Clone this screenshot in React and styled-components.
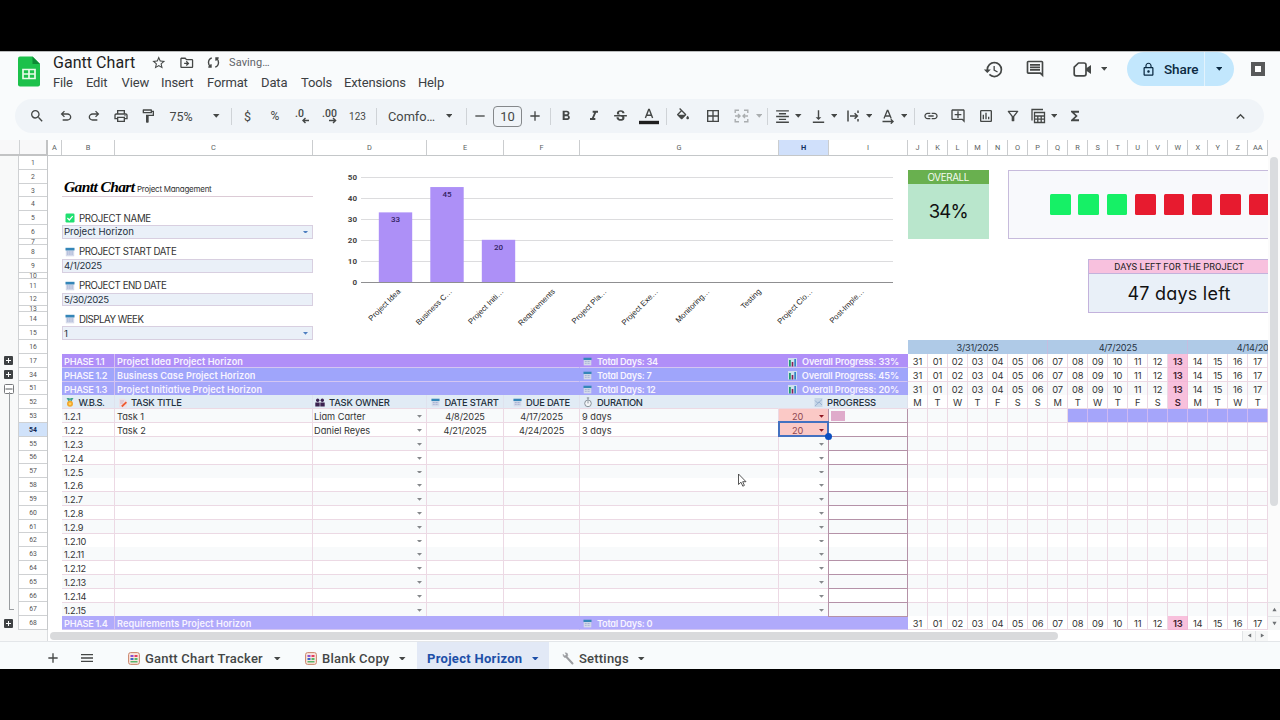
import React from "react";
import styled, { createGlobalStyle, css } from "styled-components";
import {
  MdSearch, MdOutlinePrint, MdOutlineFormatPaint, MdFormatBold, MdFormatItalic,
  MdBorderAll, MdFormatAlignCenter, MdVerticalAlignBottom, MdLink, MdOutlineAddComment,
  MdOutlineInsertChart, MdOutlineFilterAlt, MdFunctions, MdKeyboardArrowUp, MdAdd, MdMenu, MdRemove,
  MdStarOutline, MdOutlineDriveFileMove, MdHistory, MdOutlineComment, MdLockOutline,
  MdStrikethroughS,
} from "react-icons/md";

const GlobalStyle = createGlobalStyle`
  * { box-sizing: border-box; }
  html, body { margin: 0; padding: 0; background: #000; }
  body { overflow: hidden; font-family: Roboto, "Liberation Sans", sans-serif; }
`;

const UI = `Roboto, "Liberation Sans", sans-serif`;
const ROUND = `Inter, Lato, sans-serif`;
const ROW = 13.82;
const GAP_ROW = 6.1;
const DAY = 20.03;
const COLUMNS = `14px 53px 198px 114px 77px 76px 199px 50px 79px repeat(18, ${DAY}px)`;
const LINE = "#ecd9e4";

/* ---------- frame ---------- */

const Screen = styled.div`
  width: 1280px;
  height: 720px;
  padding: 51px 0;
  background: #000;
  overflow: hidden;
`;

const AppWindow = styled.div`
  display: flex;
  flex-direction: column;
  height: 618px;
  background: #f9fbfc;
  border-top: 1px solid #b9bbbc;
  overflow: hidden;
`;

/* ---------- header ---------- */

const Header = styled.header`
  display: flex;
  height: 47px;
  padding-left: 18px;
  color: #444746;
`;

const Logo = styled.svg`
  width: 22px;
  height: 31px;
  margin: 4px 13px 0 0;
  flex: none;
`;

const TitleBlock = styled.div`
  display: flex;
  flex-direction: column;
  flex: none;
  width: 930px;
`;

const TitleRow = styled.div`
  display: flex;
  align-items: center;
  height: 21px;
  svg { flex: none; }
`;

const DocTitle = styled.span`
  width: 98px;
  font-size: 16px;
  letter-spacing: 0.04px;
  color: #1f1f1f;
  white-space: nowrap;
`;

const TitleIcon = styled.span`
  display: flex;
  width: 28px;
  font-size: 15.5px;
`;

const Saving = styled.span`
  margin-left: -6px;
  font-size: 11px;
  letter-spacing: 0.1px;
  color: #5f6368;
`;

const MenuBar = styled.nav`
  display: flex;
  height: 18px;
  align-items: center;
  font-size: 13px;
  letter-spacing: -0.15px;
  color: #3c4043;
`;

const MenuItem = styled.span`
  flex: none;
  width: ${(p) => p.$w}px;
`;

const HeaderActions = styled.div`
  display: flex;
  align-items: center;
  height: 34px;
  flex: 1;
  svg { flex: none; }
`;

const Action = styled.span`
  display: flex;
  justify-content: center;
  align-items: center;
  flex: none;
  width: ${(p) => p.$w}px;
  font-size: ${(p) => p.$size || 21}px;
`;

const ShareButton = styled.div`
  display: flex;
  align-items: center;
  flex: none;
  width: 107px;
  height: 34px;
  margin-left: 16px;
  border-radius: 17px;
  background: #c2e7fd;
  color: #0b2a42;
  font-size: 13.5px;
  font-weight: 500;
  overflow: hidden;
`;

const ShareMain = styled.span`
  display: flex;
  align-items: center;
  gap: 8px;
  width: 78px;
  height: 100%;
  padding-left: 14px;
  letter-spacing: -0.1px;
  border-right: 1px solid #e3f3fd;
`;

const ShareMore = styled.span`
  display: flex;
  justify-content: center;
  width: 28px;
`;

const StopMark = styled.span`
  width: 14px;
  height: 14px;
  margin-left: 17px;
  border: 4px solid #58595a;
  background: #fff;
`;

/* ---------- toolbar ---------- */

const Toolbar = styled.div`
  display: flex;
  align-items: center;
  flex: none;
  height: 34px;
  margin: 0 16px 7px 15px;
  padding-left: 7px;
  border-radius: 17px;
  background: #f0f4f8;
  color: #444746;
`;

const Slot = styled.span`
  display: flex;
  align-items: center;
  justify-content: ${(p) => (p.$start ? "flex-start" : "center")};
  flex: none;
  width: ${(p) => p.$w}px;
  margin-left: ${(p) => p.$ml || 0}px;
  font-size: ${(p) => p.$size || 16}px;
  letter-spacing: ${(p) => p.$ls || 0}px;
  opacity: ${(p) => (p.$dim ? 0.4 : 1)};
  white-space: nowrap;
  svg { flex: none; }
`;

const Divider = styled.span`
  flex: none;
  width: 1px;
  height: 17px;
  margin-left: ${(p) => p.$l}px;
  margin-right: ${(p) => p.$r}px;
  background: #cfd3d7;
`;

const SizeBox = styled.span`
  display: flex;
  align-items: center;
  justify-content: center;
  width: 29px;
  height: 21px;
  border: 1px solid #85888b;
  border-radius: 4px;
  font-size: 13px;
`;

const DropSlot = styled.span`
  display: flex;
  align-items: center;
  justify-content: space-between;
  flex: none;
  width: 27.5px;
  margin-left: ${(p) => p.$ml}px;
  font-size: 17px;
`;

const CollapseSlot = styled.span`
  display: flex;
  justify-content: center;
  width: 47px;
  margin-left: auto;
  font-size: 17px;
`;

/* ---------- sheet ---------- */

const ColumnHeader = styled.div`
  display: flex;
  flex: none;
  height: 16px;
  background: #fbfbfc;
`;

const Corner = styled.div`
  display: flex;
  flex: none;
  width: 48px;
  border-right: 2px solid #c2c3c4;
  border-bottom: 2px solid #c2c3c4;
  background: #f8f8f9;
  &::before {
    content: "";
    width: 19px;
    border-right: 1px solid #d0d2d4;
  }
`;

const ColumnLetters = styled.div`
  display: grid;
  grid-template-columns: ${COLUMNS};
  width: 1220px;
  overflow: hidden;
  background: #fff;
  border-bottom: 1px solid #c4c7c9;
`;

const Letter = styled.span`
  display: flex;
  align-items: center;
  justify-content: center;
  font: 7.4px ${UI};
  color: #5b5f62;
  border-right: 1px solid #cbcdcf;
  ${(p) => p.$active && css`
    background: #d0e0fb;
    color: #15305e;
    font-weight: 700;
  `}
`;

const SheetBody = styled.div`
  display: flex;
  flex: none;
  height: 474.4px;
  background: #fff;
  overflow: hidden;
`;

const GroupGutter = styled.div`
  flex: none;
  display: flex;
  flex-direction: column;
  align-items: center;
  width: 18px;
  padding-top: 198px;
  background: #f8f9f9;
`;

const GroupCell = styled.div`
  display: flex;
  align-items: center;
  justify-content: center;
  flex: none;
  width: 18px;
  height: ${ROW}px;
  padding-right: 1px;
`;

const GroupLine = styled.div`
  flex: none;
  width: 5px;
  height: ${ROW * 16 - 4}px;
  margin: -3px 0 7px 4px;
  border-left: 1px solid #9a9da0;
  border-bottom: 1px solid #9a9da0;
`;

const RowNumbers = styled.div`
  flex: none;
  width: 30px;
  border-left: 1px solid #cfd1d3;
  border-right: 1px solid #c6c8ca;
  background: #fff;
`;

const RowNumber = styled.div`
  display: flex;
  align-items: center;
  justify-content: center;
  height: ${(p) => (p.$small ? GAP_ROW : ROW)}px;
  padding-top: 1px;
  overflow: hidden;
  border-bottom: 1px solid #cfd1d3;
  font: 6.8px ${UI};
  color: #555;
  ${(p) => p.$active && css`
    background: #d0e2fa;
    color: #102a56;
    font-weight: 700;
  `}
`;

const Cells = styled.div`
  flex: none;
  width: 1220px;
  overflow: hidden;
`;

const Dashboard = styled.div`
  display: flex;
  height: 198px;
`;

/* ---------- project form ---------- */

const ProjectForm = styled.div`
  flex: none;
  width: 251px;
  margin-left: 14px;
  padding-top: ${ROW}px;
`;

const Brand = styled.div`
  display: flex;
  align-items: baseline;
  height: ${ROW * 2}px;
  padding: 7px 0 0 2px;
  margin-bottom: ${ROW}px;
  border-bottom: 1px solid #dccbd6;
  white-space: nowrap;
`;

const BrandName = styled.span`
  width: 73px;
  font: italic 700 15.5px/19px "Liberation Serif", serif;
  letter-spacing: -0.6px;
  color: #000;
`;

const BrandSub = styled.span`
  font: 8px ${ROUND};
  font-feature-settings: "cv11";
  letter-spacing: -0.26px;
  color: #333;
`;

const FieldLabel = styled.div`
  display: flex;
  align-items: center;
  gap: 4px;
  height: ${ROW}px;
  padding-left: 3px;
  font: 9.7px ${ROUND};
  letter-spacing: ${(p) => p.$ls}px;
  color: #333;
  white-space: nowrap;
`;

const Field = styled.div`
  display: flex;
  align-items: center;
  justify-content: space-between;
  height: ${ROW}px;
  margin-bottom: ${(p) => (p.$last ? 0 : GAP_ROW)}px;
  padding: 0 4px 0 1px;
  border: 1px solid #d8cfe0;
  background: #eaf0f8;
  font: 9.6px ${ROUND};
  font-feature-settings: "cv11";
  letter-spacing: ${(p) => p.$ls}px;
  color: #26323f;
`;

const Chart = styled.svg`
  flex: none;
  width: 595px;
  height: 198px;
`;

/* ---------- right side summary ---------- */

const Summary = styled.div`
  flex: none;
  display: flex;
  flex-direction: column;
  width: 361px;
  padding-top: 13.5px;
`;

const SummaryTop = styled.div`
  display: flex;
  gap: 19px;
  height: 69.5px;
  margin-bottom: 19.5px;
`;

const Overall = styled.div`
  flex: none;
  width: 80.5px;
  background: #b9e6cc;
`;

const OverallHead = styled.div`
  height: 14px;
  background: #69b04f;
  color: #f4fbf0;
  font: 9.8px/15px ${ROUND};
  letter-spacing: -0.35px;
  text-align: center;
`;

const OverallValue = styled.div`
  font: 18.5px/55px ${ROUND};
  letter-spacing: -0.9px;
  text-align: center;
  color: #111;
`;

const SquarePanel = styled.div`
  display: flex;
  align-items: center;
  gap: 7.9px;
  flex: 1;
  padding-left: 41.5px;
  border: 1px solid #c7bbdc;
  border-right: 0;
  background: #f8f9fc;
  overflow: hidden;
`;

const Square = styled.span`
  flex: none;
  width: 20.5px;
  height: 20.5px;
  border-radius: 1.5px;
  background: ${(p) => (p.$done ? "#16f066" : "#e71b2f")};
`;

const DaysLeft = styled.div`
  width: 181px;
  height: 54.5px;
  margin: 0 0 27.2px 180px;
  border: 1px solid #c3b2dc;
  border-right: 0;
  background: #e9f0f8;
`;

const DaysLeftHead = styled.div`
  height: 14px;
  border-bottom: 1px solid #c3b2dc;
  background: #f8c1de;
  font: 9.3px/14px ${UI};
  letter-spacing: 0.1px;
  text-align: center;
  color: #222;
`;

const DaysLeftValue = styled.div`
  font: 18px/39px ${ROUND};
  font-feature-settings: "cv11";
  letter-spacing: 0.22px;
  text-align: center;
  color: #111;
`;

const Weeks = styled.div`
  display: flex;
  flex: none;
  height: 13.8px;
  overflow: hidden;
`;

const Week = styled.span`
  flex: none;
  width: ${DAY * 7}px;
  border-right: 1px solid #c4bde0;
  background: #afcae7;
  font: 9.2px/15px ${ROUND};
  letter-spacing: -0.25px;
  text-align: center;
  color: #26323f;
`;

/* ---------- task table ---------- */

const Row = styled.div`
  display: grid;
  grid-template-columns: ${COLUMNS};
  height: ${ROW}px;
  font: 9.2px ${ROUND};
  font-feature-settings: "cv11";
  color: #333;
  white-space: nowrap;
`;

const Cell = styled.div`
  position: relative;
  display: flex;
  align-items: center;
  justify-content: ${(p) => p.$align || "flex-start"};
  gap: ${(p) => p.$gap ?? 0}px;
  min-width: 0;
  padding: ${(p) => p.$pad || "2px 2px 0"};
  letter-spacing: ${(p) => p.$ls || 0}px;
  border-right: 1px solid ${LINE};
  border-bottom: 1px solid ${LINE};
  background: ${(p) => p.$bg || "#fff"};
  grid-column: span ${(p) => p.$span || 1};
`;

const PhaseCell = styled(Cell)`
  border-right-color: ${(p) => (p.$edge ? "#d5c2ef" : "transparent")};
  border-bottom-color: #d4c6f2;
  color: #f7f3ff;
  font-weight: 600;
`;

const PhaseTotals = styled(PhaseCell)`
  justify-content: space-between;
  padding: 2px 8px 0 3px;
`;

const Labelled = styled.span`
  display: flex;
  align-items: center;
  gap: 5px;
  letter-spacing: ${(p) => p.$ls || 0}px;
`;

const HeadCell = styled(Cell)`
  border-right-color: ${(p) => (p.$edge === false ? "#e1ebf5" : "#dfe2ee")};
  background: #e1ebf5;
  color: #24303c;
  font-size: 9.4px;
  font-weight: 500;
`;

const Blank = styled.div`
  border-right: 1px solid transparent;
`;

const DayCell = styled(Cell)`
  padding: 2px 0 0;
  justify-content: center;
  font-size: 9.3px;
  letter-spacing: -0.1px;
  ${(p) => p.$today && css`
    background: #f8c0dc;
    border-bottom-color: #f3b7d6;
    border-right-color: #f3b7d6;
    font-weight: 600;
    color: #40202f;
  `}
  ${(p) => p.$busy && css`
    background: #a5a5fa;
    border-right-color: #cfb9f2;
  `}
`;

const ProgressCell = styled(Cell)`
  padding: 0 2px;
  border-right-color: #b592a8;
  border-bottom-color: #b592a8;
  box-shadow: -1px 0 0 #b592a8;
  z-index: 1;
`;

const ProgressBar = styled.span`
  width: 14px;
  height: 10px;
  background: #dfabcb;
`;

const Selection = styled.span`
  position: absolute;
  z-index: 2;
  inset: -2px -1px -1px -1px;
  border: 2px solid #4471c0;
  &::after {
    content: "";
    position: absolute;
    right: -5px;
    bottom: -5px;
    width: 7px;
    height: 7px;
    border-radius: 50%;
    background: #0c4fc0;
  }
`;

const Percent = styled.span`
  flex: 1;
  padding-left: 11px;
  color: #8d4650;
`;

const Cursor = styled.svg`
  position: absolute;
  z-index: 3;
  left: 157px;
  top: 8px;
  width: 10px;
  height: 15px;
`;

/* ---------- scrollbars ---------- */

const VerticalScroll = styled.div`
  display: flex;
  flex-direction: column;
  justify-content: space-between;
  align-items: center;
  flex: none;
  width: 12px;
  background: #fbfbfb;
`;

const VerticalThumb = styled.div`
  width: 8px;
  height: 349px;
  margin-top: 1px;
  border-radius: 4px;
  background: #dadcdf;
`;

const StepButtons = styled.div`
  display: flex;
  flex-direction: ${(p) => (p.$row ? "row" : "column")};
  background: #f6f7f7;
`;

const StepButton = styled.span`
  display: flex;
  align-items: center;
  justify-content: center;
  width: ${(p) => p.$w}px;
  height: ${(p) => p.$h}px;
  border: solid #e2e4e6;
  border-width: ${(p) => (p.$row ? "0 0 0 1px" : "1px 0 0 0")};
`;

const HorizontalScroll = styled.div`
  display: flex;
  flex: none;
  align-items: center;
  height: 10.6px;
  padding-right: 12px;
  background: #fff;
`;

const ScrollStub = styled.div`
  flex: none;
  width: 48px;
  height: 100%;
  background: #f8f9f9;
  border-right: 1px solid #dadcde;
`;

const HorizontalThumb = styled.div`
  width: 1008px;
  height: 8px;
  margin: 0 auto 0 2px;
  border-radius: 4px;
  background: #d9dadc;
`;

/* ---------- tabs ---------- */

const Tabs = styled.footer`
  display: flex;
  align-items: stretch;
  flex: 1;
  padding-left: 38px;
  border-top: 1px solid #e3e6e9;
  background: #f8fbfc;
  color: #444746;
`;

const TabTool = styled.span`
  display: flex;
  align-items: center;
  justify-content: center;
  padding-top: 6px;
  width: ${(p) => p.$w}px;
  font-size: 16px;
`;

const Tab = styled.span`
  display: flex;
  align-items: center;
  flex: none;
  width: ${(p) => p.$w}px;
  padding: 6px 0 0 ${(p) => p.$pl}px;
  font-size: 13px;
  font-weight: 500;
  letter-spacing: 0.22px;
  white-space: nowrap;
  svg { flex: none; }
  ${(p) => p.$active && css`
    background: #e2e9f6;
    color: #1d4fa8;
    font-weight: 700;
    letter-spacing: 0.3px;
  `}
`;

const TabName = styled.span`
  width: ${(p) => p.$w}px;
  margin-left: ${(p) => p.$ml ?? 5}px;
`;

/* ---------- drawings ---------- */

const Caret = ({ w = 6.5, color = "currentColor" }) => (
  <svg width={w} height={w * 0.56} viewBox="0 0 8 4.5" style={{ flex: "none" }}><path d="M0 0h8L4 4.500z" fill={color} /></svg>
);

const Arrow = ({ dir }) => (
  <svg width="5" height="5" viewBox="0 0 6 6">
    <path d="M3 1 5.5 5h-5z" fill="#6f7275" transform={`rotate(${dir} 3 3)`} />
  </svg>
);

const UndoIcon = ({ flip }) => (
  <svg width="16" height="16" viewBox="0 -960 960 960" fill="currentColor">
    <path
      transform={flip ? "translate(960 0) scale(-1 1)" : undefined}
      d="M280-200v-80h284q63 0 109.5-40T720-420q0-60-46.5-100T564-560H312l104 104-56 56-200-200 200-200 56 56-104 104h252q97 0 166.5 63T800-420q0 94-69.5 157T564-200H280Z"
    />
  </svg>
);

const SyncIcon = () => (
  <svg width="13" height="13" viewBox="0 0 13 13" fill="none" stroke="currentColor" strokeWidth="1.400">
    <path d="M4.800 1.800Q1.500 3 1.500 6.500q0 2.500 1.800 4M1.300 11h2.700V8.200M8.200 11.200q3.300-1.200 3.300-4.700 0-2.500-1.800-4M11.700 2H9v2.800" />
  </svg>
);

const FillIcon = () => (
  <svg width="16" height="16" viewBox="0 0 24 24" fill="currentColor">
    <path d="M16.560 8.940 7.620 0 6.210 1.410l2.380 2.380-5.150 5.150a1.490 1.490 0 0 0 0 2.120l5.500 5.500c.29.29.68.44 1.060.44s.77-.15 1.060-.44l5.500-5.500c.59-.58.59-1.530 0-2.120zM5.210 10 10 5.210 14.790 10H5.210zM19 11.500s-2 2.170-2 3.500c0 1.100.9 2 2 2s2-.9 2-2c0-1.330-2-3.500-2-3.500z" />
  </svg>
);

const DecimalIcon = ({ more }) => (
  <svg width="17" height="16" viewBox="0 0 17 16">
    <text x={more ? 0 : 1} y="8.5" fontSize="10.5" fontWeight="500" fontFamily="Roboto, sans-serif" fill="currentColor" textLength={more ? 15 : 9}>
      {more ? ".00" : ".0"}
    </text>
    <path d={more ? "M7 12.5h6M11 10l2.6 2.5L11 15" : "M9 12.5h6M11.5 10 9 12.5l2.5 2.5"} fill="none" stroke="currentColor" strokeWidth="1.4" />
  </svg>
);

const TextColorIcon = () => (
  <svg width="20" height="18" viewBox="0 0 20 18">
    <path d="M6.400 11 9.700 2.500h.6l3.300 8.500M7.600 8.200h4.800" fill="none" stroke="currentColor" strokeWidth="1.4" />
    <path d="M0 13.800h20v3.400H0z" fill="#1f1f1f" />
  </svg>
);

const MergeIcon = () => (
  <svg width="15" height="14" viewBox="0 0 15 14" fill="none" stroke="currentColor" strokeWidth="1.4">
    <path d="M5 1.2H1.2V4M1.2 10v2.8H5M10 1.2h3.8V4M13.8 10v2.8H10M1 7h4.5M14 7H9.500M4 5l2 2-2 2M11 5 9 7l2 2" />
  </svg>
);

const WrapIcon = () => (
  <svg width="15" height="14" viewBox="0 0 15 14" fill="none" stroke="currentColor" strokeWidth="1.5">
    <path d="M3 1.500v11M13 1.500v2.500M13 10v2.500M5 7h7.500M9.600 4.200 12.400 7l-2.800 2.800" />
  </svg>
);

const RotateIcon = () => (
  <svg width="15" height="15" viewBox="0 0 15 15" fill="none" stroke="currentColor" strokeWidth="1.3">
    <path d="M4 9.500 7.300 1.500h.6l3.300 8M5.200 7h4.800M2.500 12.500h10M10.800 10.300l2.300 2.200-2.300 2.200" />
  </svg>
);

const FilterViewIcon = () => (
  <svg width="16" height="16" viewBox="0 0 16 16" fill="none" stroke="currentColor" strokeWidth="1.3">
    <path d="M2 12.500V1.500h11M4.500 4.500h10v10h-10zM4.500 8h10M4.500 11.200h10M7.800 8v6.500M11.200 8v6.500" />
  </svg>
);

const CameraIcon = () => (
  <svg width="19" height="17" viewBox="0 0 19 17">
    <path d="M5.500 2H11q2 0 2 2v9q0 1.800-2 1.800H3.200q-2 0-2-1.800V6.200z" fill="none" stroke="currentColor" strokeWidth="1.700" strokeLinejoin="round" />
    <path d="M13 7.500 18 4v9l-5-3.500z" fill="currentColor" />
  </svg>
);

const LogoMark = () => (
  <Logo viewBox="0 0 22 31">
    <path d="M2 .5h12.500L22 8v20.500q0 2-2 2H2q-2 0-2-2v-26q0-2 2-2z" fill="#1cc14b" />
    <path d="M14.500.5 22 8h-7.500z" fill="#0c8a35" />
    <path d="M5 13.500h12v9H5zM5 18h12M11 13.500v9" fill="none" stroke="#e9fbe9" strokeWidth="1.700" />
  </Logo>
);

const CalendarEmoji = ({ s = 10 }) => (
  <svg width={s} height={s} viewBox="0 0 10 10">
    <path d="M.8 1.500h8.400v7.800H.8z" fill="#d5daea" />
    <path d="M.5.800h9v2.600h-9z" fill="#3486b8" />
    <path d="M2 5h6M2 7h6" stroke="#9dabd0" strokeWidth="1" strokeDasharray="1.200 .5" />
  </svg>
);

const CheckEmoji = () => (
  <svg width="10" height="10" viewBox="0 0 10 10">
    <rect x=".5" y=".5" width="9" height="9" rx="1.200" fill="#1fe070" />
    <path d="m2.400 5 1.900 2 3.400-3.800" fill="none" stroke="#fff" strokeWidth="1.200" />
  </svg>
);

const MedalEmoji = () => (
  <svg width="10" height="11" viewBox="0 0 10 11">
    <path d="M1.500 1h3L6 5H4zM8.500 1h-3L4 5h2z" fill="#3fa08c" />
    <circle cx="5" cy="6.800" r="3" fill="#f2a62c" />
    <circle cx="5" cy="6.800" r="1.400" fill="#ffd35c" />
  </svg>
);

const MemoEmoji = () => (
  <svg width="10" height="10" viewBox="0 0 10 10">
    <path d="M1 .8h5.500L9 3v6.200H1z" fill="#eddfe6" />
    <path d="M2 3h4M2 5h3" stroke="#c9a7b4" strokeWidth=".7" />
    <path d="m3.800 8.500 4.600-4.300" stroke="#ee5a2f" strokeWidth="1.800" />
  </svg>
);

const PeopleEmoji = () => (
  <svg width="10" height="9" viewBox="0 0 10 9" fill="#3a2150">
    <circle cx="2.700" cy="2.200" r="1.700" /><circle cx="7.300" cy="2.200" r="1.700" />
    <path d="M.3 4.500h4.400v4H.3zM5.300 4.500h4.400v4H5.300z" />
  </svg>
);

const StopwatchEmoji = () => (
  <svg width="10" height="11" viewBox="0 0 10 11" fill="none" stroke="#7d8790">
    <circle cx="5" cy="6.400" r="3.300" fill="#f3f6f8" strokeWidth=".9" /><path d="M5 6.400V4.200M3.800.9h2.400M5 1v1.800" strokeWidth=".9" />
  </svg>
);

const BarsEmoji = () => (
  <svg width="9" height="10" viewBox="0 0 9 10">
    <path d="M0 1h9v8.500H0z" fill="#cfe0ee" />
    <path d="M1 3h1.800v6.500H1z" fill="#1f9c72" /><path d="M3.700 5h1.600v4.500H3.700z" fill="#8d1f55" /><path d="M6.300 2H8v7.500H6.300z" fill="#3285c5" />
  </svg>
);

const TrendEmoji = () => (
  <svg width="9" height="9" viewBox="0 0 9 9">
    <path d="M.5 0h8v9h-8z" fill="#c6d6e8" /><path d="M1 2.500 3.500 5 5 4l3 3M1 8l7-6.500" fill="none" stroke="#8fa9cb" strokeWidth=".8" />
  </svg>
);

const SheetEmoji = () => (
  <svg width="12" height="13" viewBox="0 0 12 13">
    <rect x=".6" y=".6" width="10.800" height="11.800" rx="2" fill="#fbe6df" stroke="#c98468" />
    <path d="M2.500 3h3v2h-3z" fill="#8a4fd0" /><path d="M6.500 3h3v2h-3z" fill="#e2405f" />
    <path d="M2.500 6h3v2h-3z" fill="#3a68c8" /><path d="M6.500 6h3v2h-3zM2.500 9h7v1.500h-7z" fill="#58b66a" />
  </svg>
);

const WrenchEmoji = () => (
  <svg width="12" height="13" viewBox="0 0 12 13" fill="none" stroke="#9b9da0">
    <path d="m4.500 5 6 6.500" strokeWidth="2" strokeLinecap="round" />
    <path d="M1 2.200 2.800 4 4.300 2.800 3.200.8Q6 .5 5.800 3.500 5 6 2.500 5.500 1 5 1 2.200z" fill="#9b9da0" strokeWidth=".5" />
  </svg>
);

const PlusToggle = () => (
  <svg width="9" height="9" viewBox="0 0 9 9">
    <rect width="9" height="9" rx="1" fill="#3f4244" /><path d="M2 4.500h5M4.500 2v5" stroke="#fff" strokeWidth="1" />
  </svg>
);

const MinusToggle = () => (
  <svg width="10" height="10" viewBox="0 0 10 10">
    <rect x=".5" y=".5" width="9" height="9" rx="1" fill="#fff" stroke="#77797c" /><path d="M1.500 5h7" stroke="#55585a" />
  </svg>
);

/* ---------- data ---------- */

const letters = ["A", "B", "C", "D", "E", "F", "G", "H", "I", "J", "K", "L", "M", "N", "O", "P", "Q", "R", "S", "T", "U", "V", "W", "X", "Y", "Z", "AA"];
const rowNumbers = [1, 2, 3, 4, 5, 6, 7, 8, 9, 10, 11, 12, 13, 14, 15, 16, 17, 34, 51, 52, 53, 54, 55, 56, 57, 58, 59, 60, 61, 62, 63, 64, 65, 66, 67, 68];
const smallRows = [7, 10, 13];
const dates = ["31", "01", "02", "03", "04", "05", "06", "07", "08", "09", "10", "11", "12", "13", "14", "15", "16", "17"];
const weekdays = ["M", "T", "W", "T", "F", "S", "S", "M", "T", "W", "T", "F", "S", "S", "M", "T", "W", "T"];
const bars = [
  { label: "Project Idea", value: 33 }, { label: "Business C…", value: 45 }, { label: "Project Initi…", value: 20 },
  { label: "Requirements" }, { label: "Project Pla…" }, { label: "Project Exe…" }, { label: "Monitoring…" },
  { label: "Testing" }, { label: "Project Clo…" }, { label: "Post-Imple…" },
];
const tasks = Array.from({ length: 15 }, (_, i) => ({ wbs: `1.2.${i + 1}` }));
Object.assign(tasks[0], { title: "Task 1", owner: "Liam Carter", start: "4/8/2025", due: "4/17/2025", duration: "9 days", progress: 20, from: 8 });
Object.assign(tasks[1], { title: "Task 2", owner: "Daniel Reyes", start: "4/21/2025", due: "4/24/2025", duration: "3 days", progress: 20, selected: true });

/* ---------- parts ---------- */

function ProgressChart() {
  const zero = 126;
  const y = (v) => zero - v * 2.11;
  return (
    <Chart viewBox="0 0 595 198" fontFamily='Roboto, "Liberation Sans", sans-serif' fontSize="8">
      {[50, 40, 30, 20, 10, 0].map((v) => (
        <g key={v}>
          <path d={`M48 ${Math.round(y(v)) + 0.5}h532`} stroke={v ? "#dcdcde" : "#8f8f91"} />
          <text x="44" y={y(v) + 3} textAnchor="end" fontWeight="700" fill="#444">{v}</text>
        </g>
      ))}
      {bars.map((b, i) => {
        const x = 82.5 + i * 51.5;
        return (
          <g key={b.label}>
            {b.value && <rect x={x - 16.7} y={y(b.value)} width="33.4" height={zero - y(b.value)} fill="#ad90f7" />}
            {b.value && <text x={x} y={y(b.value) + 10} textAnchor="middle" fontWeight="500" fill="#33215f">{b.value}</text>}
            <text
              transform={`translate(${x + 5.5} 136) rotate(-45)`}
              textAnchor="end"
              fontFamily='"Liberation Sans", sans-serif'
              fontSize="7.8"
              fill="#222"
            >
              {b.label}
            </text>
          </g>
        );
      })}
    </Chart>
  );
}

const Days = ({ values, bg }) => values.map((v, i) => <DayCell key={i} $bg={bg} $today={i === 13}>{v}</DayCell>);

function PhaseRow({ no, title, days, progress, color, bg }) {
  return (
    <Row>
      <Blank />
      <PhaseCell $bg={color} $edge $ls={-0.3}>PHASE {no}</PhaseCell>
      <PhaseCell $bg={color} $span={4} $ls={0.07}>{title} Project Horizon</PhaseCell>
      <PhaseTotals $bg={color} $span={3}>
        <Labelled $ls={-0.27}><CalendarEmoji s={9} />Total Days: {days}</Labelled>
        {progress && <Labelled $ls={-0.14}><BarsEmoji />Overall Progress: {progress}</Labelled>}
      </PhaseTotals>
      <Days values={dates} bg={bg} />
    </Row>
  );
}

function TaskRow({ task, index }) {
  const bg = index % 2 ? "#fff" : "#f8fafb";
  const filled = task.progress !== undefined;
  return (
    <Row>
      <Blank />
      <Cell $bg={bg} $ls={-0.2}>{task.wbs}</Cell>
      <Cell $bg={bg}>{task.title}</Cell>
      <Cell $bg={bg} $align="space-between" $pad="2px 4px 0 1px"><span>{task.owner}</span><Caret w={5} color="#85888b" /></Cell>
      <Cell $bg={bg} $align="center" $ls={-0.15}>{task.start}</Cell>
      <Cell $bg={bg} $align="center" $ls={-0.15}>{task.due}</Cell>
      <Cell $bg={bg}>
        {task.duration}
        {index === 4 && (
          <Cursor viewBox="0 0 10 15"><path d="M1.500 1v10.500l2.500-2.300 1.800 4 1.600-.8-1.700-3.700H9z" fill="#fff" stroke="#444" strokeWidth=".9" /></Cursor>
        )}
      </Cell>
      <Cell $bg={filled ? "#fbc9c6" : bg} $align="flex-end" $pad="2px 4px 0 2px">
        {filled && <Percent>{task.progress}</Percent>}
        <Caret w={5} color={filled ? "#8e1620" : "#85888b"} />
        {task.selected && <Selection />}
      </Cell>
      <ProgressCell $bg={bg}>{index === 0 && <ProgressBar />}</ProgressCell>
      {dates.map((_, i) => <DayCell key={i} $bg={bg} $busy={task.from !== undefined && i >= task.from} />)}
    </Row>
  );
}

function Tools() {
  return (
    <Toolbar>
      <Slot $w={30}><MdSearch /></Slot>
      <Slot $w={28}><UndoIcon /></Slot>
      <Slot $w={28}><UndoIcon flip /></Slot>
      <Slot $w={26}><MdOutlinePrint /></Slot>
      <Slot $w={27}><MdOutlineFormatPaint /></Slot>
      <Slot $w={40} $size={12.5}>75%</Slot>
      <Slot $w={29} $ml={1}><Caret /></Slot>
      <Divider $l={0} $r={0} />
      <Slot $w={31} $size={12.5}>$</Slot>
      <Slot $w={24} $size={12}>%</Slot>
      <Slot $w={30}><DecimalIcon /></Slot>
      <Slot $w={26}><DecimalIcon more /></Slot>
      <Slot $w={29} $size={10}>123</Slot>
      <Divider $l={4} $r={11} />
      <Slot $w={49} $size={12.8} $start>Comfo…</Slot>
      <Slot $w={24}><Caret /></Slot>
      <Divider $l={5} $r={0.5} />
      <Slot $w={24}><MdRemove /></Slot>
      <Slot $w={32}><SizeBox>10</SizeBox></Slot>
      <Slot $w={23}><MdAdd /></Slot>
      <Divider $l={3.5} $r={2} />
      <Slot $w={26}><MdFormatBold /></Slot>
      <Slot $w={29}><MdFormatItalic /></Slot>
      <Slot $w={25} $size={17}><MdStrikethroughS /></Slot>
      <Slot $w={31}><TextColorIcon /></Slot>
      <Divider $l={2} $r={3} />
      <Slot $w={26}><FillIcon /></Slot>
      <Slot $w={33}><MdBorderAll /></Slot>
      <Slot $w={24} $dim><MergeIcon /></Slot>
      <Slot $w={12} $dim><Caret /></Slot>
      <Divider $l={2} $r={1} />
      <DropSlot $ml={5}><MdFormatAlignCenter /><Caret /></DropSlot>
      <DropSlot $ml={8}><MdVerticalAlignBottom /><Caret /></DropSlot>
      <DropSlot $ml={7.5}><WrapIcon /><Caret /></DropSlot>
      <DropSlot $ml={7.5}><RotateIcon /><Caret /></DropSlot>
      <Divider $l={6.5} $r={3} />
      <Slot $w={26}><MdLink /></Slot>
      <Slot $w={29}><MdOutlineAddComment /></Slot>
      <Slot $w={26}><MdOutlineInsertChart /></Slot>
      <Slot $w={29}><MdOutlineFilterAlt /></Slot>
      <DropSlot $ml={2}><FilterViewIcon /><Caret /></DropSlot>
      <Slot $w={28} $ml={4}><MdFunctions /></Slot>
      <CollapseSlot><MdKeyboardArrowUp /></CollapseSlot>
    </Toolbar>
  );
}

export default function App() {
  return (
    <Screen>
      <GlobalStyle />
      <AppWindow>
        <Header>
          <LogoMark />
          <TitleBlock>
            <TitleRow>
              <DocTitle>Gantt Chart</DocTitle>
              <TitleIcon><MdStarOutline /></TitleIcon>
              <TitleIcon><MdOutlineDriveFileMove /></TitleIcon>
              <TitleIcon><SyncIcon /></TitleIcon>
              <Saving>Saving…</Saving>
            </TitleRow>
            <MenuBar>
              <MenuItem $w={33}>File</MenuItem>
              <MenuItem $w={35.5}>Edit</MenuItem>
              <MenuItem $w={39.5}>View</MenuItem>
              <MenuItem $w={46}>Insert</MenuItem>
              <MenuItem $w={54}>Format</MenuItem>
              <MenuItem $w={40}>Data</MenuItem>
              <MenuItem $w={43}>Tools</MenuItem>
              <MenuItem $w={74}>Extensions</MenuItem>
              <MenuItem $w={30}>Help</MenuItem>
            </MenuBar>
          </TitleBlock>
          <HeaderActions>
            <Action $w={20}><MdHistory /></Action>
            <Action $w={64} $size={20}><MdOutlineComment /></Action>
            <Action $w={30}><CameraIcon /></Action>
            <Action $w={14}><Caret /></Action>
            <ShareButton>
              <ShareMain><MdLockOutline size={15} />Share</ShareMain>
              <ShareMore><Caret /></ShareMore>
            </ShareButton>
            <StopMark />
          </HeaderActions>
        </Header>

        <Tools />

        <ColumnHeader>
          <Corner />
          <ColumnLetters>
            {letters.map((l) => <Letter key={l} $active={l === "H"}>{l}</Letter>)}
          </ColumnLetters>
        </ColumnHeader>

        <SheetBody>
          <GroupGutter>
            <GroupCell><PlusToggle /></GroupCell>
            <GroupCell><PlusToggle /></GroupCell>
            <GroupCell><MinusToggle /></GroupCell>
            <GroupLine />
            <GroupCell><PlusToggle /></GroupCell>
          </GroupGutter>
          <RowNumbers>
            {rowNumbers.map((n) => (
              <RowNumber key={n} $small={smallRows.includes(n)} $active={n === 54}>{n}</RowNumber>
            ))}
          </RowNumbers>
          <Cells>
            <Dashboard>
              <ProjectForm>
                <Brand><BrandName>Gantt Chart</BrandName><BrandSub>Project Management</BrandSub></Brand>
                <FieldLabel $ls={-0.33}><CheckEmoji />PROJECT NAME</FieldLabel>
                <Field $ls={-0.02}>Project Horizon<Caret w={5} color="#4e7fc0" /></Field>
                <FieldLabel $ls={-0.45}><CalendarEmoji />PROJECT START DATE</FieldLabel>
                <Field $ls={-0.35}>4/1/2025</Field>
                <FieldLabel $ls={-0.45}><CalendarEmoji />PROJECT END DATE</FieldLabel>
                <Field $ls={-0.4}>5/30/2025</Field>
                <FieldLabel $ls={-0.5}><CalendarEmoji />DISPLAY WEEK</FieldLabel>
                <Field $last>1<Caret w={5} color="#4e7fc0" /></Field>
              </ProjectForm>
              <ProgressChart />
              <Summary>
                <SummaryTop>
                  <Overall>
                    <OverallHead>OVERALL</OverallHead>
                    <OverallValue>34%</OverallValue>
                  </Overall>
                  <SquarePanel>
                    {Array.from({ length: 8 }, (_, i) => <Square key={i} $done={i < 3} />)}
                  </SquarePanel>
                </SummaryTop>
                <DaysLeft>
                  <DaysLeftHead>DAYS LEFT FOR THE PROJECT</DaysLeftHead>
                  <DaysLeftValue>47 days left</DaysLeftValue>
                </DaysLeft>
                <Weeks><Week>3/31/2025</Week><Week>4/7/2025</Week><Week>4/14/2025</Week></Weeks>
              </Summary>
            </Dashboard>

            <PhaseRow no="1.1" title="Project Idea" days={34} progress="33%" color="#b08ff8" />
            <PhaseRow no="1.2" title="Business Case" days={7} progress="45%" color="#9fa5fb" />
            <PhaseRow no="1.3" title="Project Initiative" days={12} progress="20%" color="#a5a6fa" bg="#f8fafb" />
            <Row>
              <Blank />
              <HeadCell $gap={3.5} $pad="2px 3px 0" $ls={-0.6}><MedalEmoji />W.B.S.</HeadCell>
              <HeadCell $gap={3} $pad="2px 3px 0" $ls={-0.2}><MemoEmoji />TASK TITLE</HeadCell>
              <HeadCell $gap={4} $pad="2px 2px 0" $ls={-0.15}><PeopleEmoji />TASK OWNER</HeadCell>
              <HeadCell $gap={4} $align="center" $ls={-0.25}><CalendarEmoji s={9} />DATE START</HeadCell>
              <HeadCell $gap={4} $align="center" $ls={-0.25}><CalendarEmoji s={9} />DUE DATE</HeadCell>
              <HeadCell $gap={4} $pad="2px 3px 0" $ls={-0.4} $edge={false}><StopwatchEmoji />DURATION</HeadCell>
              <HeadCell $gap={4} $align="center" $pad="2px 0 0 4px" $span={2} $ls={-0.15}><TrendEmoji />PROGRESS</HeadCell>
              <Days values={weekdays} />
            </Row>
            {tasks.map((t, i) => <TaskRow key={t.wbs} task={t} index={i} />)}
            <PhaseRow no="1.4" title="Requirements" days={0} color="#b0aafb" />
          </Cells>
          <VerticalScroll>
            <VerticalThumb />
            <StepButtons>
              <StepButton $w={12} $h={14}><Arrow dir={0} /></StepButton>
              <StepButton $w={12} $h={14}><Arrow dir={180} /></StepButton>
            </StepButtons>
          </VerticalScroll>
        </SheetBody>

        <HorizontalScroll>
          <ScrollStub />
          <HorizontalThumb />
          <StepButtons $row>
            <StepButton $row $w={13} $h={10}><Arrow dir={-90} /></StepButton>
            <StepButton $row $w={13} $h={10}><Arrow dir={90} /></StepButton>
          </StepButtons>
        </HorizontalScroll>

        <Tabs>
          <TabTool $w={30}><MdAdd /></TabTool>
          <TabTool $w={38}><MdMenu /></TabTool>
          <Tab $w={177} $pl={22}><SheetEmoji /><TabName $w={129}>Gantt Chart Tracker</TabName><Caret /></Tab>
          <Tab $w={134} $pl={22}><SheetEmoji /><TabName $w={77}>Blank Copy</TabName><Caret /></Tab>
          <Tab $w={132} $pl={10} $active><TabName $w={105} $ml={0}>Project Horizon</TabName><Caret /></Tab>
          <Tab $w={110} $pl={13}><WrenchEmoji /><TabName $w={59}>Settings</TabName><Caret /></Tab>
        </Tabs>
      </AppWindow>
    </Screen>
  );
}
